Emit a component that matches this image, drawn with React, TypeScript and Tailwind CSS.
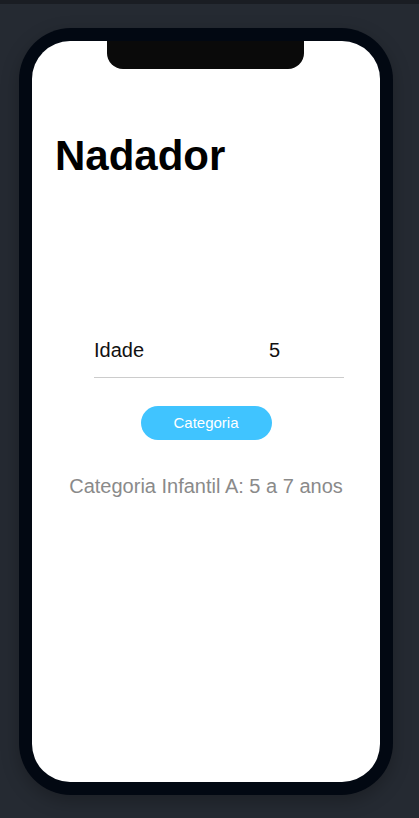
import React from "react";

export default function App() {
  return (
    <div className="min-h-[818px] bg-[#252a32] font-['Liberation_Sans',Arial,sans-serif]">
      <div className="h-[4px] bg-[#1a1d23]" />
      <div className="pt-[24px] pl-[19px]">
        <div className="w-[374px] h-[767px] rounded-[52px] bg-[#020812] p-[13px] shadow-[0_6px_18px_rgba(0,0,0,0.25)]">
          <div className="relative h-full rounded-[38px] bg-white overflow-hidden">
            <div className="absolute left-[75px] top-0 w-[197px] h-[28px] rounded-b-[16px] bg-[#0a0a0a]" />

            <div className="pt-[91px] pl-[23px]">
              <h1 className="text-[42px] font-bold text-black leading-[48px]">Nadador</h1>
            </div>

            <div className="mt-[159px] ml-[62px] w-[250px] flex items-center border-b border-[#cccccc] pb-[15px]">
              <span className="text-[20px] leading-[23px] text-[#111]">Idade</span>
              <span className="ml-auto mr-[64px] text-[20px] leading-[23px] text-[#111]">5</span>
            </div>

            <div className="mt-[28px] flex justify-center">
              <button className="w-[131px] h-[34px] rounded-full bg-[#40c4ff] text-white text-[15px]">
                Categoria
              </button>
            </div>

            <p className="mt-[35px] text-center text-[20px] leading-[23px] text-[#8a8a8a]">
              Categoria Infantil A: 5 a 7 anos
            </p>
          </div>
        </div>
      </div>
    </div>
  );
}
